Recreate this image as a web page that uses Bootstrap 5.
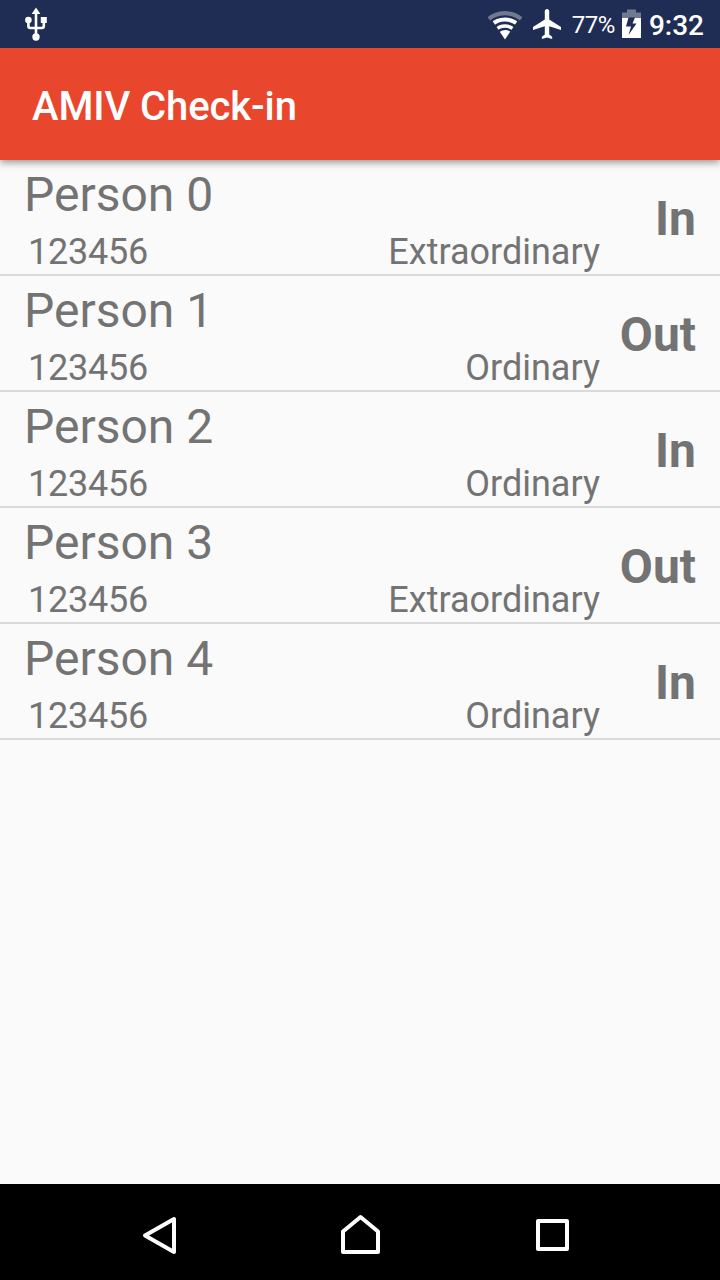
<!DOCTYPE html>
<html lang="en">
<head>
<meta charset="utf-8">
<meta name="viewport" content="width=device-width, initial-scale=1">
<title>AMIV Check-in</title>
<link href="https://cdn.jsdelivr.net/npm/bootstrap@5.3.0/dist/css/bootstrap.min.css" rel="stylesheet">
<style>
body{font-family:Roboto,sans-serif;background:#fafafa;color:#737373}
svg{display:block;flex:none}
.statusbar{height:48px;background:#1f2d54;padding:0 16px 0 24px}
.plane{margin-left:10px}
.pct{font-size:24px;line-height:48px;margin:1px 7px 0 11px;letter-spacing:-.45px}
.clock{font-size:28px;font-weight:500;line-height:48px;margin:3px 0 0 8px}
.appbar{height:112px;background:#e8462d;padding:6px 32px 0;box-shadow:0 2px 8px rgba(0,0,0,.45);clip-path:inset(0 0 -16px 0)}
.appbar h1{font-size:40px;font-weight:500;line-height:48px;letter-spacing:-.1px}
.person{height:116px;border-bottom:2px solid #dadada;padding:7px 24px 1px}
.person-name{font-size:48px;line-height:56px}
.details{font-size:36px;line-height:42px;margin-top:8px;padding-left:4px}
.legi{letter-spacing:-.25px}
.info{width:576px;flex:none}
.state{font-size:48px;font-weight:700;line-height:56px;padding-bottom:2px}
.navkeys{height:96px;background:#000}
</style>
</head>
<body>
<div class="d-flex flex-column vh-100 overflow-hidden">
  <div class="statusbar d-flex align-items-center text-white">
    <svg class="me-auto" width="24" height="48" viewBox="24 0 24 48" fill="#fff"><path d="M36 7.5l4.400 6.500h-8.800z"/><circle cx="28.400" cy="20" r="3.300"/><path d="M40.800 17h6v6h-6z"/><circle cx="36" cy="37" r="3.700"/><path d="M36 13v23M28.400 20v6q0 2 2 2h11.400q2 0 2-2v-6" fill="none" stroke="#fff" stroke-width="2.600"/></svg>
    <svg width="36" height="48" viewBox="487 0 36 48"><clipPath id="fan"><path d="M505 39.500L484.200 13V5h41.600v8z"/></clipPath><clipPath id="fan-inner"><path d="M505 39.500L488.500 15h33z"/></clipPath><g clip-path="url(#fan)"><circle cx="505" cy="39" r="25.800" fill="none" stroke="#717991" stroke-width="4.200"/></g><g clip-path="url(#fan-inner)" fill="none" stroke="#fff"><circle cx="505" cy="39" r="19.500" stroke-width="4"/><circle cx="505" cy="39" r="13" stroke-width="3.500"/><circle cx="505" cy="39" r="4.500" stroke-width="9"/></g></svg>
    <svg class="plane" width="28" height="48" viewBox="533 0 28 48"><path fill="#fff" transform="translate(530.050 6) scale(1.474 1.500)" d="M21 16v-2l-8-5V3.500C13 2.670 12.330 2 11.500 2S10 2.670 10 3.500V9l-8 5v2l8-2.500V19l-2 1.500V22l3.500-1 3.500 1v-1.500L13 19v-5.500z"/></svg>
    <span class="pct">77%</span>
    <svg width="19" height="48" viewBox="622 0 19 48"><path fill="#717991" d="M627 9.500h9v3h5V18h-19v-5.500h5z"/><path fill="#fff" d="M622 18h19v20h-19z"/><path fill="#1f2d54" d="M628.500 17.500h6.500l-2.500 6h4L628.500 35l2.500-8.500h-5z"/></svg>
    <span class="clock">9:32</span>
  </div>
  <header class="appbar d-flex align-items-center text-white position-relative"><h1 class="m-0">AMIV Check-in</h1></header>
  <main class="flex-grow-1">
    <div class="person d-flex"><div class="info"><div class="person-name">Person 0</div><div class="details d-flex justify-content-between"><span class="legi">123456</span><span>Extraordinary</span></div></div><div class="state ms-auto align-self-center">In</div></div>
    <div class="person d-flex"><div class="info"><div class="person-name">Person 1</div><div class="details d-flex justify-content-between"><span class="legi">123456</span><span>Ordinary</span></div></div><div class="state ms-auto align-self-center">Out</div></div>
    <div class="person d-flex"><div class="info"><div class="person-name">Person 2</div><div class="details d-flex justify-content-between"><span class="legi">123456</span><span>Ordinary</span></div></div><div class="state ms-auto align-self-center">In</div></div>
    <div class="person d-flex"><div class="info"><div class="person-name">Person 3</div><div class="details d-flex justify-content-between"><span class="legi">123456</span><span>Extraordinary</span></div></div><div class="state ms-auto align-self-center">Out</div></div>
    <div class="person d-flex"><div class="info"><div class="person-name">Person 4</div><div class="details d-flex justify-content-between"><span class="legi">123456</span><span>Ordinary</span></div></div><div class="state ms-auto align-self-center">In</div></div>
  </main>
  <nav class="navkeys" aria-label="System navigation">
    <svg width="720" height="96" viewBox="0 1184 720 96" fill="none" stroke="#fff" stroke-width="4" stroke-linejoin="round"><path d="M174 1219v33l-29-16.500z"/><path d="M343 1252v-20.500l17.500-14.500 17.500 14.500V1252z"/><path d="M538 1221h29v28h-29z"/></svg>
  </nav>
</div>
<script src="https://cdn.jsdelivr.net/npm/bootstrap@5.3.0/dist/js/bootstrap.bundle.min.js"></script>
</body>
</html>
